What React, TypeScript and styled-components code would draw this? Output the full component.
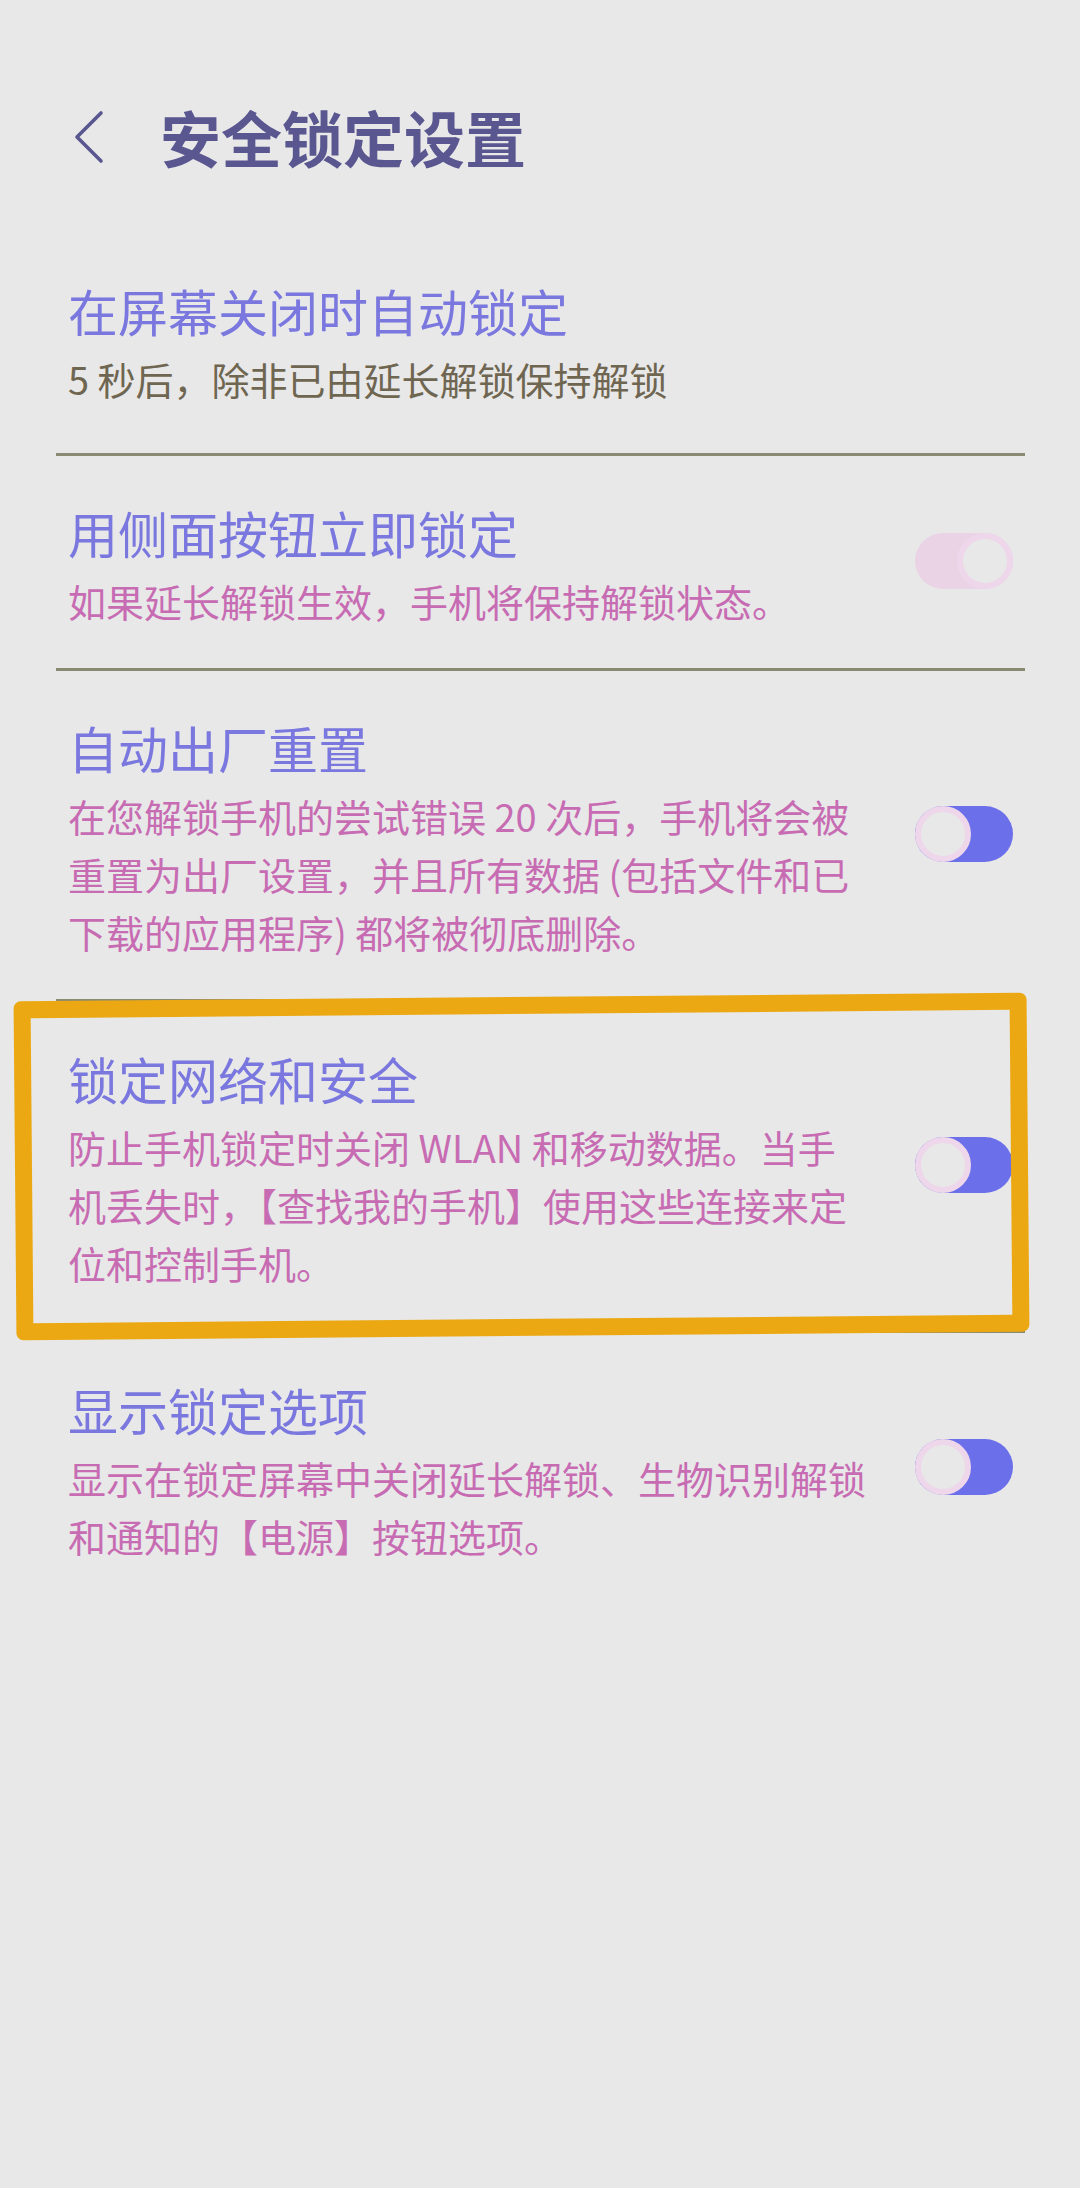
import React from "react";
import styled, { createGlobalStyle, css } from "styled-components";

type SettingItem = {
  title: string;
  summary: string;
  toggle?: "on" | "dimmed";
  tone: "muted" | "accent";
  padBottom: number;
  highlighted?: boolean;
  last?: boolean;
};

const items: SettingItem[] = [
  {
    title: "在屏幕关闭时自动锁定",
    summary: "5 秒后，除非已由延长解锁保持解锁",
    tone: "muted",
    padBottom: 45,
  },
  {
    title: "用侧面按钮立即锁定",
    summary: "如果延长解锁生效，手机将保持解锁状态。",
    toggle: "dimmed",
    tone: "accent",
    padBottom: 38,
  },
  {
    title: "自动出厂重置",
    summary:
      "在您解锁手机的尝试错误 20 次后，手机将会被重置为出厂设置，并且所有数据 (包括文件和已下载的应用程序) 都将被彻底删除。",
    toggle: "on",
    tone: "accent",
    padBottom: 38,
  },
  {
    title: "锁定网络和安全",
    summary:
      "防止手机锁定时关闭 WLAN 和移动数据。当手机丢失时，【查找我的手机】使用这些连接来定位和控制手机。",
    toggle: "on",
    tone: "accent",
    padBottom: 38,
    highlighted: true,
  },
  {
    title: "显示锁定选项",
    summary: "显示在锁定屏幕中关闭延长解锁、生物识别解锁和通知的【电源】按钮选项。",
    toggle: "on",
    tone: "accent",
    padBottom: 80,
    last: true,
  },
];

const GlobalStyle = createGlobalStyle`
  html, body {
    margin: 0;
    padding: 0;
    background: #e8e8e8;
  }
  body {
    font-family: "Noto Sans CJK SC", "Noto Sans", sans-serif;
  }
`;

const App: React.FC = () => {
  return (
    <>
      <GlobalStyle />
      <Page>
        <Header>
          <BackButton aria-label="返回">
            <svg width="32" height="56" viewBox="0 0 32 56" fill="none">
              <polyline
                points="28,4 4,28 28,52"
                stroke="#5a5790"
                strokeWidth="3.6"
                strokeLinecap="round"
                strokeLinejoin="round"
              />
            </svg>
          </BackButton>
          <HeaderTitle>安全锁定设置</HeaderTitle>
        </Header>

        <List>
          {items.map((item) => (
            <Row key={item.title} $padBottom={item.padBottom} $last={item.last}>
              <TextBlock>
                <Title>{item.title}</Title>
                <Summary $tone={item.tone}>{item.summary}</Summary>
              </TextBlock>
              {item.toggle && (
                <Track $state={item.toggle}>
                  <Thumb />
                </Track>
              )}
              {item.highlighted && <Highlight />}
            </Row>
          ))}
        </List>
      </Page>
    </>
  );
};

export default App;

const Page = styled.div`
  min-height: 2188px;
  background: #e8e8e8;
  overflow: hidden;
`;

const Header = styled.div`
  display: flex;
  align-items: center;
  height: 100px;
  margin-top: 87px;
  padding-left: 73px;
`;

const BackButton = styled.button`
  display: flex;
  align-items: center;
  padding: 0;
  border: none;
  background: none;
  margin-right: 55px;
`;

const HeaderTitle = styled.h1`
  margin: 0;
  font-size: 61px;
  line-height: 100px;
  font-weight: 700;
  color: #5a5790;
`;

const List = styled.div`
  margin: 47px 55px 0 56px;
`;

const Row = styled.div<{ $padBottom: number; $last?: boolean }>`
  position: relative;
  display: flex;
  align-items: center;
  justify-content: space-between;
  padding: 46px 12px ${(p) => p.$padBottom}px;
  border-bottom: ${(p) => (p.$last ? "none" : "3px solid #898a74")};
`;

const TextBlock = styled.div`
  width: 800px;
  display: flex;
  flex-direction: column;
  gap: 10px;
`;

const Title = styled.div`
  font-size: 50px;
  line-height: 60px;
  color: #7a78df;
`;

const Summary = styled.div<{ $tone: "muted" | "accent" }>`
  font-size: 38px;
  line-height: 58px;
  color: ${(p) => (p.$tone === "muted" ? "#6f6651" : "#c76cb3")};
`;

const Track = styled.div<{ $state: "on" | "dimmed" }>`
  flex-shrink: 0;
  display: flex;
  width: 98px;
  height: 56px;
  margin-bottom: 11px;
  border-radius: 28px;
  ${(p) =>
    p.$state === "on"
      ? css`
          justify-content: flex-start;
          background: #6b6fe9;
        `
      : css`
          justify-content: flex-end;
          background: #ebd3e6;
        `}
`;

const Thumb = styled.div`
  box-sizing: border-box;
  width: 56px;
  height: 56px;
  border-radius: 50%;
  border: 6px solid #eed6eb;
  background: #e8e8e8;
`;

// orange marker frame drawn over the row
const Highlight = styled.div`
  position: absolute;
  top: -5px;
  bottom: -6px;
  left: -41px;
  right: -3px;
  border: 17px solid #eba812;
  border-radius: 7px;
  transform: rotate(-0.5deg);
  pointer-events: none;
`;
